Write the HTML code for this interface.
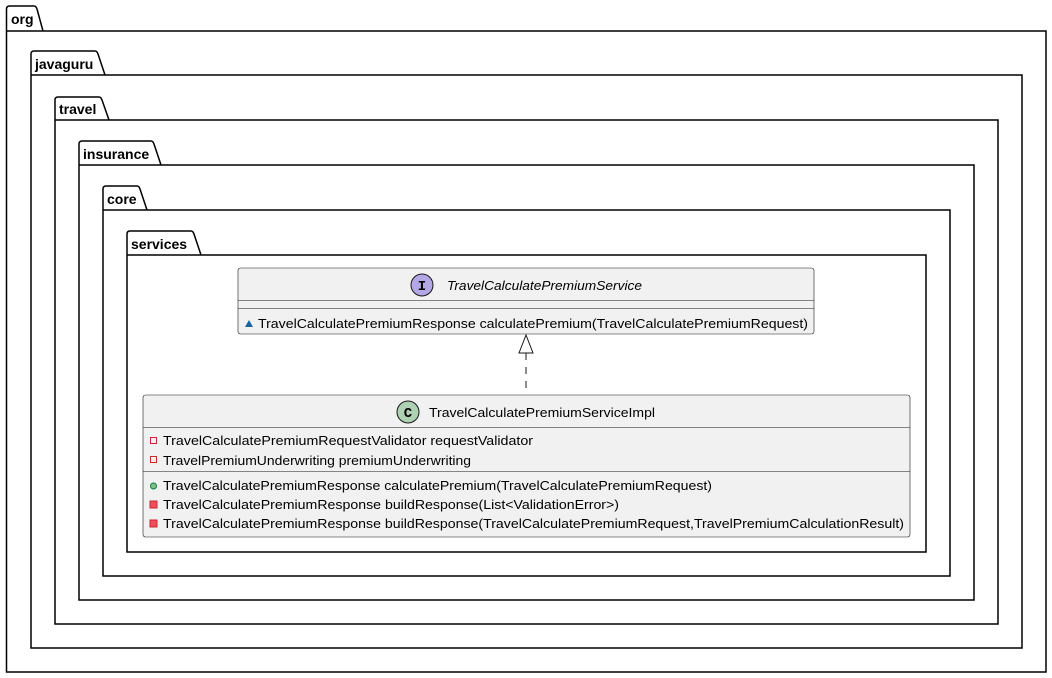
<!DOCTYPE html>
<html><head><meta charset="utf-8"><style>html,body{margin:0;padding:0;background:#fff}svg{display:block}</style></head><body>
<svg width="1052" height="678" xmlns="http://www.w3.org/2000/svg" font-family="Liberation Sans, sans-serif">
<g fill="none" stroke="#000" stroke-width="1.5">
<path d="M6.5,31 L6.5,9 Q6.5,6 9.5,6 L34,6 Q36,6 37,9 L43,31 M6.5,31 L1046,31 L1046,672 L6.5,672 Z"/>
<path d="M31,75 L31,54 Q31,51 34,51 L95,51 Q97,51 98,54 L105,75 M31,75 L1022,75 L1022,648 L31,648 Z"/>
<path d="M55,120 L55,100 Q55,97 58,97 L99,97 Q101,97 102,100 L109,120 M55,120 L998,120 L998,624 L55,624 Z"/>
<path d="M79,165 L79,144 Q79,141 82,141 L151,141 Q153,141 154,144 L161,165 M79,165 L974,165 L974,600 L79,600 Z"/>
<path d="M103,210 L103,189 Q103,186 106,186 L137,186 Q139,186 140,189 L147,210 M103,210 L950,210 L950,576 L103,576 Z"/>
<path d="M127,255 L127,234 Q127,231 130,231 L191,231 Q193,231 194,234 L201,255 M127,255 L926,255 L926,552 L127,552 Z"/>
</g>
<g font-weight="bold" font-size="14" fill="#000">
<text x="11" y="24">org</text>
<text x="35" y="69">javaguru</text>
<text x="59" y="114">travel</text>
<text x="83" y="159">insurance</text>
<text x="107" y="204">core</text>
<text x="131" y="249">services</text>
</g>
<rect x="238" y="268" width="576" height="66" rx="2.5" fill="#F1F1F1" stroke="#181818" stroke-width="0.6"/>
<line x1="238" y1="300.5" x2="814" y2="300.5" stroke="#181818" stroke-width="0.6"/>
<line x1="238" y1="308.5" x2="814" y2="308.5" stroke="#181818" stroke-width="0.6"/>
<circle cx="422" cy="285" r="11" fill="#B4A7E5" stroke="#181818" stroke-width="1"/>
<text x="422" y="290" text-anchor="middle" font-family="Liberation Mono, monospace" font-weight="bold" font-size="14">I</text>
<text x="447" y="290" font-style="italic" font-size="13" textLength="195" lengthAdjust="spacingAndGlyphs">TravelCalculatePremiumService</text>
<path d="M245,327 L249,320 L253,327 Z" fill="#1963A0"/>
<text x="258" y="328" font-size="13" textLength="550" lengthAdjust="spacingAndGlyphs">TravelCalculatePremiumResponse calculatePremium(TravelCalculatePremiumRequest)</text>
<path d="M526,335 L519,353 L533,353 Z" fill="#fff" stroke="#181818" stroke-width="1"/>
<line x1="526" y1="353" x2="526" y2="395" stroke="#181818" stroke-width="1" stroke-dasharray="7,7"/>
<rect x="143" y="395" width="767" height="142" rx="2.5" fill="#F1F1F1" stroke="#181818" stroke-width="0.6"/>
<line x1="143" y1="427.5" x2="910" y2="427.5" stroke="#181818" stroke-width="0.6"/>
<line x1="143" y1="471.5" x2="910" y2="471.5" stroke="#181818" stroke-width="0.6"/>
<circle cx="408" cy="412" r="11" fill="#ADD1B2" stroke="#181818" stroke-width="1"/>
<text x="408" y="417" text-anchor="middle" font-family="Liberation Mono, monospace" font-weight="bold" font-size="14">C</text>
<text x="429" y="417" font-size="13" textLength="226" lengthAdjust="spacingAndGlyphs">TravelCalculatePremiumServiceImpl</text>
<g font-size="13">
<rect x="150.5" y="437.5" width="6" height="6" fill="none" stroke="#C82930" stroke-width="1"/>
<text x="163" y="445" textLength="370" lengthAdjust="spacingAndGlyphs">TravelCalculatePremiumRequestValidator requestValidator</text>
<rect x="150.5" y="456.5" width="6" height="6" fill="none" stroke="#C82930" stroke-width="1"/>
<text x="163" y="465" textLength="308" lengthAdjust="spacingAndGlyphs">TravelPremiumUnderwriting premiumUnderwriting</text>
<circle cx="153.5" cy="486" r="3" fill="#84BE84" stroke="#038048" stroke-width="1"/>
<text x="163" y="490" textLength="549" lengthAdjust="spacingAndGlyphs">TravelCalculatePremiumResponse calculatePremium(TravelCalculatePremiumRequest)</text>
<rect x="150" y="501" width="7" height="7" fill="#F24D5C" stroke="#C82930" stroke-width="1"/>
<text x="163" y="509" textLength="456" lengthAdjust="spacingAndGlyphs">TravelCalculatePremiumResponse buildResponse(List&lt;ValidationError&gt;)</text>
<rect x="150" y="520" width="7" height="7" fill="#F24D5C" stroke="#C82930" stroke-width="1"/>
<text x="163" y="528" textLength="741" lengthAdjust="spacingAndGlyphs">TravelCalculatePremiumResponse buildResponse(TravelCalculatePremiumRequest,TravelPremiumCalculationResult)</text>
</g>
</svg>
</body></html>
